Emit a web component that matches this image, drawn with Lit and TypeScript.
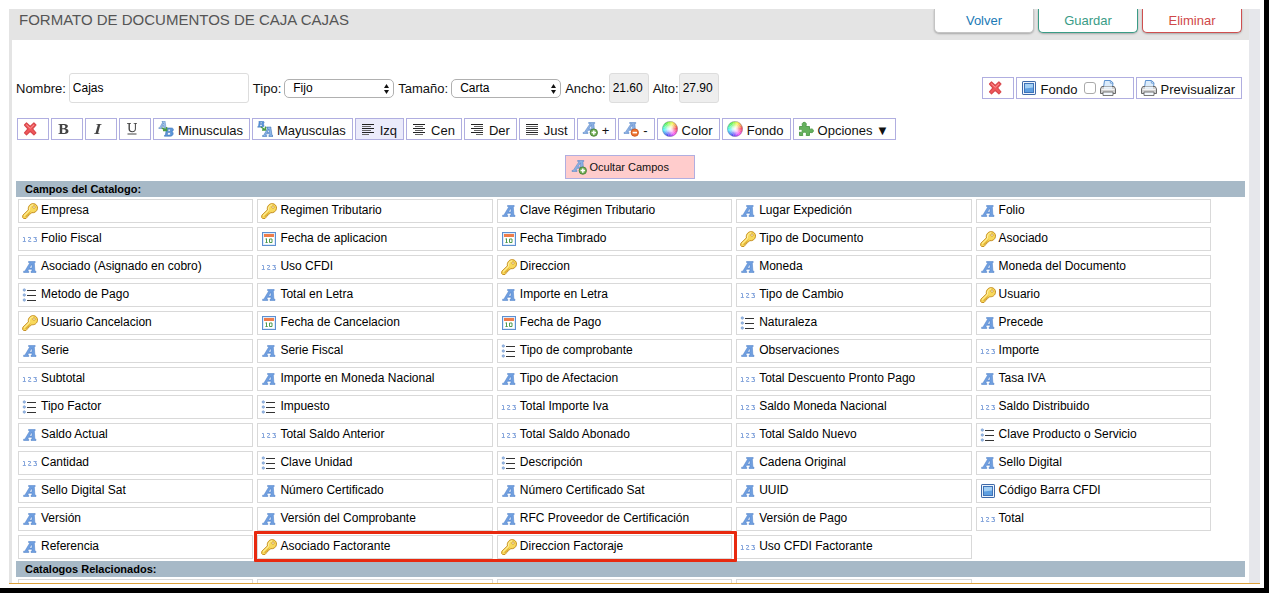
import { LitElement, html, css, svg, nothing, TemplateResult } from "lit";
import { customElement, property, state } from "lit/decorators.js";
import { classMap } from "lit/directives/class-map.js";

const wheel = Array.from({ length: 24 }, (_, i) => {
  const a = (i * 15 * Math.PI) / 180;
  const b = ((i + 1.1) * 15 * Math.PI) / 180;
  const d = `M8 8L${8 + 7.6 * Math.cos(a)} ${8 - 7.6 * Math.sin(a)}A7.6 7.6 0 0 0 ${8 + 7.6 * Math.cos(b)} ${8 - 7.6 * Math.sin(b)}Z`;
  return svg`<path d=${d} fill="hsl(${i * 15} 90% 58%)"/>`;
});

const lines = (rows: number[][]) =>
  rows.map(([x, w], i) => svg`<rect x=${x} y=${3 + i * 2} width=${w} height="1" fill=${i % 2 ? "#666" : "#222"}/>`);

const bigA = svg`
  <path d="M6.500 2.500h6.700v1h-.9l.6 8.700h1.100v1.300H9v-1.300h1.100l-.1-1.900H6.600l-1 1.900h1.200v1.300H1.600v-1.300h1.200l5.200-8.700H6.500zM9.800 5.100L7.500 9H10z" fill="#6f9fe0" stroke="#4a7cc6" stroke-width=".5"/>`;

const badgeA = svg`
  <path d="M6.600 1.500h6.200v.9h-.9l.7 9h1.100v1.100H8.800v-1.100h1.100l-.2-2.100H6l-1.200 2.100H6v1.100H1v-1.100h1.200l6-9H6.600zM9.500 3.800L6.900 7.900h2.700z" fill="#8cb0e2" stroke="#4d7fc4" stroke-width=".5"/>`;

const miniA = (t: string, c: string) => svg`
  <g transform=${t}><path d="M5 1h4v1l1 7h1v1H7V9h1l-.2-1.600H4.600L4 9h1v1H1V9h1l4-7H5zM7 3L5.300 6.200h2.200z" fill=${c} stroke="#2c66ae" stroke-width=".5"/></g>`;

const miniB = (t: string) => svg`
  <g transform=${t}><path d="M3 1h5.500c3 0 2.600 3.600.4 4 2.600.6 1.800 5-1.500 5H1V9h1l1-7H2.500zM5 2.400L4.700 4.500h1.800c1.300 0 1.500-2.100.2-2.100zM4.500 6l-.4 2.600h2.300c1.400 0 1.600-2.600.1-2.600z" fill="#5b96da" stroke="#2c66ae" stroke-width=".5" fill-rule="evenodd"/></g>`;

const icons: Record<string, TemplateResult> = {
  key: svg`
    <path d="M.8 12.300L6.400 6.900C5.700 3.300 8.300.5 11.400.6c2.600.2 4.200 2.200 4.100 4.600-.2 3-2.800 5-6 4.500l-1.200 1.400-1.500.1-.1 1.600-1.600.2-.2 1.600-.9.900-2.500-.1-.8-.900z" fill="#f8d95c" stroke="#c58e20"/>
    <path d="M2 12.600l5.600-5.400C6.900 4.200 8.900 1.900 11.200 1.800" fill="none" stroke="#fff2a8"/>
    <path d="M3.400 13.600L8.500 8.800" stroke="#e5b233" fill="none"/>
    <circle cx="12" cy="4.100" r="1.200" fill="#fff" stroke="#c58e20" stroke-width=".7"/>`,
  num: svg`
    <g fill="none" stroke="#86a6dc" stroke-width="1">
      <path d="M1 6.500h1.500V10M.8 10.500h3"/>
      <path d="M6 6.500h2.500V8L6.500 9.500v1H9.300"/>
      <path d="M11.500 6.500h3L13 8.200h1.500v2.300h-3"/>
    </g>`,
  text: svg`${bigA}`,
  list: svg`
    <g fill="#9dbde8" stroke="#6f94c9" stroke-width=".6"><circle cx="2.300" cy="3" r="1.200"/><circle cx="2.300" cy="8" r="1.200"/><circle cx="2.300" cy="13" r="1.200"/></g>
    <path d="M5 3.500h9M5 8.500h9M5 13.500h9" stroke="#333" fill="none"/>`,
  date: svg`
    <rect x="1.500" y="1.500" width="13" height="13" fill="#dfeafa" stroke="#5c8fd0"/>
    <rect x="3" y="3" width="10" height="10" fill="#fff"/>
    <rect x="3" y="3" width="10" height="3" fill="#ee7d4b"/>
    <path d="M5.500 7.500v4M4.500 11.500h2.200M4.500 8h1M8.500 8h2.500v3.500H8.500z" fill="none" stroke="#4e9a4e"/>`,
  image: svg`
    <rect x="1.500" y="1.500" width="13" height="13" rx=".6" fill="#eef4fc" stroke="#3d68a8"/>
    <rect x="3.500" y="3.500" width="9" height="9" fill="#5f9fe0" stroke="#3e73b8"/>
    <path d="M4 4h8v3.500c-3 0-5 1-8 1z" fill="#a3cff4"/>`,
  cross: svg`
    <path d="M2.500 4L4.500 2 8.200 5.500 11.900 2 13.900 4 10.500 7.900 13.900 11.800 11.900 13.800 8.200 10.300 4.500 13.800 2.500 11.800 5.900 7.900z" fill="#f0585c" stroke="#d8484c" stroke-width="1.200" stroke-linejoin="round"/>
    <path d="M4.300 3.700L8.200 7.300l3.900-3.600" stroke="#ff9a98" fill="none"/>`,
  bold: svg`<path d="M2.500 3h6c4.500 0 4.200 4 1 4.500 4.300.6 4 5.500-1 5.500h-6v-.8h1.300V3.800H2.500zM6.200 4v3.200h1.500c2.200 0 2.200-3.200 0-3.200zM6.200 8.200V12h1.600c2.600 0 2.600-3.800 0-3.800z" fill="#444" fill-rule="evenodd"/>`,
  italic: svg`<path d="M6.500 3h5v.8h-1.200L8.100 12.200h1.300v.8H4.200v-.8h1.300L7.900 3.800H6.500z" fill="#444"/>`,
  underline: svg`<path d="M3 2h4v.7H5.900v5.200c0 3 5 3 5 0V2.700H9.700V2H13v.7h-1.100v5.200c0 4.300-7.400 4.300-7.400 0V2.700H3zM3.500 12.500h9v1h-9z" fill="#444"/>`,
  lower: svg`${miniA("translate(0 -.5) scale(.8)", "#a9c8ee")}${miniB("translate(5.500 6) scale(.93)")}
    <path d="M4 7l4.500 2.500M8.500 6v3.500H5" stroke="#4c9c43" stroke-width="1.500" fill="none"/>`,
  upper: svg`${miniB("translate(0 -.5) scale(.68)")}${miniA("translate(4.500 5) scale(1.05)", "#8db7ea")}
    <path d="M4 6l4.500 3M8.500 5.500V9H5" stroke="#4c9c43" stroke-width="1.500" fill="none"/>`,
  left: svg`${lines([[2, 12], [2, 9], [2, 12], [2, 9], [2, 12], [2, 7]])}`,
  center: svg`${lines([[2, 12], [4, 8], [2, 12], [4, 8], [2, 12], [4, 8]])}`,
  right: svg`${lines([[2, 12], [5, 9], [2, 12], [5, 9], [2, 12], [7, 7]])}`,
  justify: svg`${lines([[2, 12], [2, 12], [2, 12], [2, 12], [2, 12], [2, 12]])}`,
  grow: svg`${badgeA}<circle cx="11.800" cy="11.600" r="3.700" fill="#72ae55" stroke="#3f7a2c" stroke-width=".8"/><path d="M11.800 9.400v4.400M9.600 11.600H14" stroke="#fff" stroke-width="1.500"/>`,
  shrink: svg`${badgeA}<circle cx="11.800" cy="11.600" r="3.700" fill="#ee7430" stroke="#c44d14" stroke-width=".8"/><path d="M9.600 11.600H14" stroke="#fff" stroke-width="1.600"/>`,
  wheel: svg`
    <defs><radialGradient id="glow"><stop offset="0" stop-color="#fff"/><stop offset=".35" stop-color="#fff" stop-opacity=".7"/><stop offset="1" stop-color="#fff" stop-opacity="0"/></radialGradient></defs>
    ${wheel}<circle cx="8" cy="8" r="7.600" fill="url(#glow)"/><circle cx="8" cy="8" r="7.600" fill="none" stroke="#8a8aa8" stroke-width=".5"/>`,
  plugin: svg`<path d="M1.500 5.500h3.200C3.500 3 4.400 1.300 6.200 1.300S9 3 7.800 5.500h3.700v3c2.200-1.200 3.900-.4 3.900 1.300s-1.700 2.500-3.900 1.300v3.400H8.200c.8-2.300 0-3.300-1.700-3.300s-2.500 1-1.700 3.300H1.500v-3.400c1.800.6 2.700 0 2.700-1.300S3.300 7.900 1.500 8.700z" fill="#66b15e" stroke="#4f9a4a" stroke-width=".9"/>`,
  printer: svg`
    <path d="M3.500 7.500l1-7h6l2.500 2.300-.5 4.700z" fill="#dcecfb" stroke="#5d92cf"/>
    <path d="M10.200.8l.2 2.300 2.300.2" fill="none" stroke="#5d92cf" stroke-width=".8"/>
    <path d="M1.800 6.500h12.400l1.300 2.300v4.700H.5V8.800z" fill="#cfcfcf" stroke="#696969"/>
    <path d="M4 6.500h8v2.300H4z" fill="#eaf4fd"/>
    <path d="M1.500 9.500h13" stroke="#f4f4f4"/>
    <path d="M3 12h10v3.500H3z" fill="#f3f8fd" stroke="#696969" stroke-width=".9"/>`,
};

const icon = (name: string) => html`<svg class="icon" viewBox="0 0 16 16" width="16" height="16" aria-hidden="true">${icons[name]}</svg>`;

const fields: [string, string][] = [
  ["key", "Empresa"], ["key", "Regimen Tributario"], ["text", "Clave Régimen Tributario"], ["text", "Lugar Expedición"], ["text", "Folio"],
  ["num", "Folio Fiscal"], ["date", "Fecha de aplicacion"], ["date", "Fecha Timbrado"], ["key", "Tipo de Documento"], ["key", "Asociado"],
  ["text", "Asociado (Asignado en cobro)"], ["num", "Uso CFDI"], ["key", "Direccion"], ["text", "Moneda"], ["text", "Moneda del Documento"],
  ["list", "Metodo de Pago"], ["text", "Total en Letra"], ["text", "Importe en Letra"], ["num", "Tipo de Cambio"], ["key", "Usuario"],
  ["key", "Usuario Cancelacion"], ["date", "Fecha de Cancelacion"], ["date", "Fecha de Pago"], ["list", "Naturaleza"], ["text", "Precede"],
  ["text", "Serie"], ["text", "Serie Fiscal"], ["list", "Tipo de comprobante"], ["text", "Observaciones"], ["num", "Importe"],
  ["num", "Subtotal"], ["text", "Importe en Moneda Nacional"], ["text", "Tipo de Afectacion"], ["num", "Total Descuento Pronto Pago"], ["text", "Tasa IVA"],
  ["list", "Tipo Factor"], ["list", "Impuesto"], ["num", "Total Importe Iva"], ["num", "Saldo Moneda Nacional"], ["num", "Saldo Distribuido"],
  ["text", "Saldo Actual"], ["num", "Total Saldo Anterior"], ["num", "Total Saldo Abonado"], ["num", "Total Saldo Nuevo"], ["list", "Clave Producto o Servicio"],
  ["num", "Cantidad"], ["list", "Clave Unidad"], ["list", "Descripción"], ["text", "Cadena Original"], ["text", "Sello Digital"],
  ["text", "Sello Digital Sat"], ["text", "Número Certificado"], ["text", "Número Certificado Sat"], ["text", "UUID"], ["image", "Código Barra CFDI"],
  ["text", "Versión"], ["text", "Versión del Comprobante"], ["text", "RFC Proveedor de Certificación"], ["text", "Versión de Pago"], ["num", "Total"],
  ["text", "Referencia"], ["key", "Asociado Factorante"], ["key", "Direccion Factoraje"], ["num", "Uso CFDI Factorante"],
];

const tools: [string, string, string][] = [
  ["cross", "", "Borrar"], ["bold", "", "Negrita"], ["italic", "", "Cursiva"], ["underline", "", "Subrayado"],
  ["lower", "Minusculas", ""], ["upper", "Mayusculas", ""], ["left", "Izq", ""], ["center", "Cen", ""], ["right", "Der", ""],
  ["justify", "Just", ""], ["grow", "+", ""], ["shrink", "-", ""], ["wheel", "Color", ""], ["wheel", "Fondo", ""], ["plugin", "Opciones ▼", ""],
];

const shared = css`
  *, *::before, *::after { box-sizing: border-box; }
  button, input, select { font: inherit; color: inherit; margin: 0; }
  .icon { display: block; flex: none; width: 16px; height: 16px; }
`;

@customElement("field-grid")
export class FieldGrid extends LitElement {
  @property() heading = "";
  @property({ attribute: false }) items: [string, string][] = [];

  static styles = [shared, css`
    :host { display: block; }
    .bar { margin: 0; padding: 0 9px; background: #a7b9c7; color: #000; font-size: 11px; line-height: 16px; font-weight: bold; }
    .grid { display: grid; grid-template-columns: repeat(5, 1fr); gap: 4px; margin: 2px 34px 2px 2px; padding: 0; list-style: none; }
    .cell { position: relative; }
    .field { display: flex; align-items: flex-start; gap: 3px; width: 100%; height: 24px; padding: 0 3px; border: 1px solid #d9d9d9; background: #fff; font-size: 12px; line-height: 20px; text-align: left; color: #000; white-space: nowrap; }
    .field .icon { margin-top: 3px; }
    .marked::after { content: ""; position: absolute; top: -4px; bottom: -3px; left: -3px; width: calc(200% + 12px); border: 3px solid #e8290f; border-radius: 1px; z-index: 1; pointer-events: none; }
  `];

  render() {
    return html`
      <h2 class="bar">${this.heading}</h2>
      <ul class="grid">
        ${this.items.map(([kind, label]) => html`
          <li class=${classMap({ cell: true, marked: label === "Asociado Factorante" })}>
            <button class="field" type="button">${kind ? icon(kind) : nothing}<span>${label}</span></button>
          </li>`)}
      </ul>`;
  }
}

@customElement("app-root")
export class AppRoot extends LitElement {
  @state() private align = "left";

  static styles = [shared, css`
    :host { display: block; height: 100vh; background: #000; font-family: "Liberation Sans", Arial, sans-serif; font-size: 13px; color: #111; }
    .frame { display: flex; height: calc(100% - 5px); margin-right: 5px; padding: 9px 4px 4px 9px; background: #fff; }
    .window { flex: 1; min-width: 0; overflow: hidden; border-bottom: 1px solid #dda13c; background: #e6e7eb; padding-right: 11px; }
    .page { min-height: 100%; background: #fff; }
    .head { display: flex; justify-content: space-between; align-items: flex-start; height: 31px; padding: 0 7px 0 10px; background: #e4e4e4; }
    .title { margin: 0; font-size: 15px; line-height: 22px; font-weight: normal; color: #555; }
    .actions { display: flex; gap: 4px; }
    .action { width: 100px; height: 24px; padding: 0; border: 1px solid; border-top: 0; border-radius: 0 0 5px 5px; background: #fff; line-height: 22px; box-shadow: 0 1px 2px #0004; }
    .volver { border-color: #c4c4c4; color: #2079b5; }
    .guardar { border-color: #3a9c86; color: #3a9c86; }
    .eliminar { border-color: #cf4f4f; color: #d04848; }
    .body { border-left: 3px solid #e4e4e4; padding: 33px 4px 0; }
    .row { display: flex; align-items: center; gap: 4px; padding-right: 3px; }
    .pair { display: flex; align-items: center; gap: 3px; }
    .tight { gap: 0; }
    .spacer { flex: 1; }
    .box { width: 40px; height: 30px; padding: 0 3px; border: 1px solid #ddd; border-radius: 3px; background: #fff; font-size: 12px; color: #000; }
    .box:disabled { background: #eee; }
    .name { width: 180px; }
    .pick { position: relative; display: flex; }
    .select { appearance: none; width: 110px; height: 19px; padding: 0 20px 1px 8px; border: 1px solid #b0b0b0; border-radius: 5px; background: #fff; font-size: 12px; color: #000; }
    .arrows { position: absolute; right: 4px; top: 4px; width: 7px; height: 12px; pointer-events: none; }
    .group { display: flex; gap: 2px; }
    .tool { display: flex; align-items: center; gap: 4px; min-width: 32px; height: 22px; padding: 0 6px 0 4px; border: 1px solid #b0aee0; background: #fff; line-height: 20px; white-space: nowrap; color: #111; }
    .tool .label { padding-top: 3px; }
    .wide { min-width: 118px; }
    .on { background: #ebebfb; }
    .check { appearance: none; width: 12px; height: 12px; margin-left: 3px; border: 1px solid #aaa; border-radius: 3px; background: #fff; }
    .tools { display: flex; gap: 2px; margin: 15px 1px; }
    .center { display: flex; justify-content: center; padding: 0 2px 2px 0; }
    .hide { display: flex; align-items: center; gap: 3px; width: 130px; height: 24px; padding: 0 5px; border: 1px solid #b0aee0; background: #ffcccc; font-size: 11px; color: #111; }
  `];

  private select(label: string, id: string, value: string) {
    return html`
      <div class="pair">
        <label for=${id}>${label}</label>
        <span class="pick">
          <select class="select" id=${id}><option>${value}</option></select>
          <svg class="arrows" viewBox="0 0 7 12" aria-hidden="true"><path d="M3.500 1L6 5H1zM3.500 11L6 7H1z" fill="#111"/></svg>
        </span>
      </div>`;
  }

  render() {
    return html`
      <div class="frame">
        <div class="window">
          <main class="page">
            <header class="head">
              <h1 class="title">FORMATO DE DOCUMENTOS DE CAJA CAJAS</h1>
              <div class="actions">
                <button class="action volver" type="button">Volver</button>
                <button class="action guardar" type="button">Guardar</button>
                <button class="action eliminar" type="button">Eliminar</button>
              </div>
            </header>
            <div class="body">
              <div class="row">
                <div class="pair"><label for="nombre">Nombre:</label><input class="box name" id="nombre" .value=${"Cajas"}></div>
                ${this.select("Tipo:", "tipo", "Fijo")}
                ${this.select("Tamaño:", "tamano", "Carta")}
                <div class="pair"><label for="ancho">Ancho:</label><input class="box" id="ancho" .value=${"21.60"} disabled></div>
                <div class="pair tight"><label for="alto">Alto:</label><input class="box" id="alto" .value=${"27.90"} disabled></div>
                <span class="spacer"></span>
                <div class="group">
                  <button class="tool" type="button" aria-label="Borrar">${icon("cross")}</button>
                  <div class="tool wide">
                    ${icon("image")}<label class="label" for="fondo">Fondo</label>
                    <input class="check" id="fondo" type="checkbox">${icon("printer")}
                  </div>
                  <button class="tool" type="button">${icon("printer")}<span class="label">Previsualizar</span></button>
                </div>
              </div>
              <div class="tools">
                ${tools.map(([name, label, hint]) => html`
                  <button class=${classMap({ tool: true, on: name === this.align })} type="button" aria-label=${hint || nothing}
                    @click=${() => { if (["left", "center", "right", "justify"].includes(name)) this.align = name; }}>
                    ${icon(name)}${label ? html`<span class="label">${label}</span>` : nothing}
                  </button>`)}
              </div>
              <div class="center"><button class="hide" type="button">${icon("grow")}<span>Ocultar Campos</span></button></div>
              <field-grid heading="Campos del Catalogo:" .items=${fields}></field-grid>
              <field-grid heading="Catalogos Relacionados:" .items=${[["", ""], ["", ""], ["", ""], ["", ""]]}></field-grid>
            </div>
          </main>
        </div>
      </div>`;
  }
}
